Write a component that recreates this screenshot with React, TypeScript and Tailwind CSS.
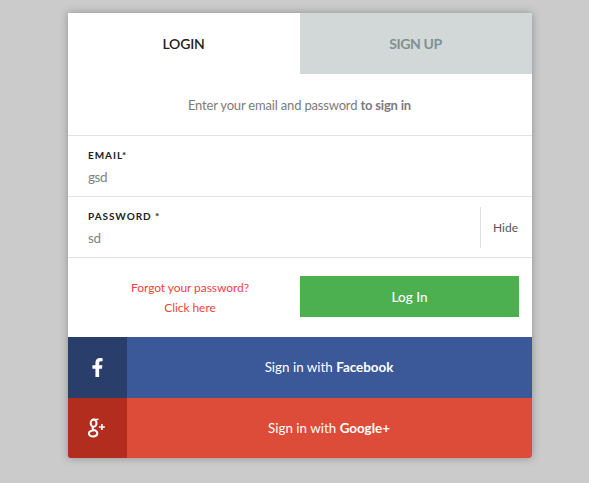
import React from 'react';
import { FaFacebookF } from 'react-icons/fa';

function Tabs() {
  return (
    <div className="flex h-[61px] text-[14px] leading-[61px] text-center">
      <button className="w-1/2 bg-white pr-px font-semibold tracking-[-0.2px] text-[#222]">LOGIN</button>
      <button className="w-1/2 bg-[#d2d8d8] pr-px font-bold tracking-[-0.4px] text-[#7f9090]">SIGN UP</button>
    </div>
  );
}

function Field({ label, value, children }: { label: string; value: string; children?: React.ReactNode }) {
  return (
    <div className="flex h-[61px] border-t border-[#e2e2e2] pl-5">
      <div className="flex-1 pt-[11px]">
        <div className="text-[10px] leading-4 font-bold tracking-[0.95px] text-[#222]">{label}</div>
        <div className="mt-[3px] text-[13.5px] leading-[22px] tracking-[-0.4px] text-[#7b8585]">{value}</div>
      </div>
      {children}
    </div>
  );
}

function GooglePlusIcon() {
  return (
    <svg viewBox="0 0 20 20" className="mr-px h-5 w-5" fill="none" stroke="white">
      <ellipse cx="6.6" cy="5.2" rx="2.9" ry="3.6" strokeWidth="2" />
      <path d="M6 0.7H12.2L10.8 2.2H8.5Z" fill="white" stroke="none" />
      <path d="M6.4 8.8C4.8 10 5.5 11.1 7.1 11.9C9.8 13.1 10.5 14 10.3 15.5C9.9 17.8 8 18.5 5.8 18.4C3.2 18.3 1.7 17.1 1.9 15.2C2.2 13.1 4.4 12.5 7.1 12.3" strokeWidth="2" />
      <path d="M14.9 6V12M11.9 9H17.9" strokeWidth="1.7" />
    </svg>
  );
}

export default function App() {
  return (
    <div className="flex h-[483px] w-[589px] justify-center overflow-hidden bg-[#cbcbcb] pt-[13px] pl-[11px] font-[Lato,sans-serif]">
      <div className="h-[445px] w-[464px] overflow-hidden rounded-b-[3px] bg-white shadow-[0_0_9px_rgba(0,0,0,0.3)]">
        <Tabs />
        <p className="h-[61px] pr-px text-center text-[13px] leading-[62px] tracking-[-0.18px] text-[#7b7b7b]">
          Enter your email and password <b>to sign in</b>
        </p>
        <Field label="EMAIL*" value="gsd" />
        <Field label="PASSWORD *" value="sd">
          <button className="mt-[10px] h-[41px] w-[52px] border-l border-[#e2e2e2] pr-[2px] text-[12px] text-[#555]">Hide</button>
        </Field>
        <div className="flex h-[80px] border-t border-[#e2e2e2] pt-[18px] pr-[13px]">
          <a className="w-[232px] pl-3 pt-[2px] text-center text-[12px] leading-[20px] tracking-[-0.07px] text-[#f4433c]">
            Forgot your password?
            <br />
            Click here
          </a>
          <button className="h-[41px] flex-1 bg-[#4caf50] pt-px text-[13.5px] font-medium text-white">Log In</button>
        </div>
        <div className="flex h-[61px] bg-[#3b5998] text-[13.4px] leading-[61px] text-white">
          <div className="flex w-[59px] items-center justify-center bg-[#293e6a]">
            <FaFacebookF size={19} />
          </div>
          <div className="flex-1 pr-px text-center">Sign in with <b>Facebook</b></div>
        </div>
        <div className="flex h-[60px] bg-[#dd4b39] text-[13.4px] leading-[61px] text-white">
          <div className="flex w-[59px] items-center justify-center bg-[#b32d1e]">
            <GooglePlusIcon />
          </div>
          <div className="flex-1 pr-px text-center">Sign in with <b>Google+</b></div>
        </div>
      </div>
    </div>
  );
}
